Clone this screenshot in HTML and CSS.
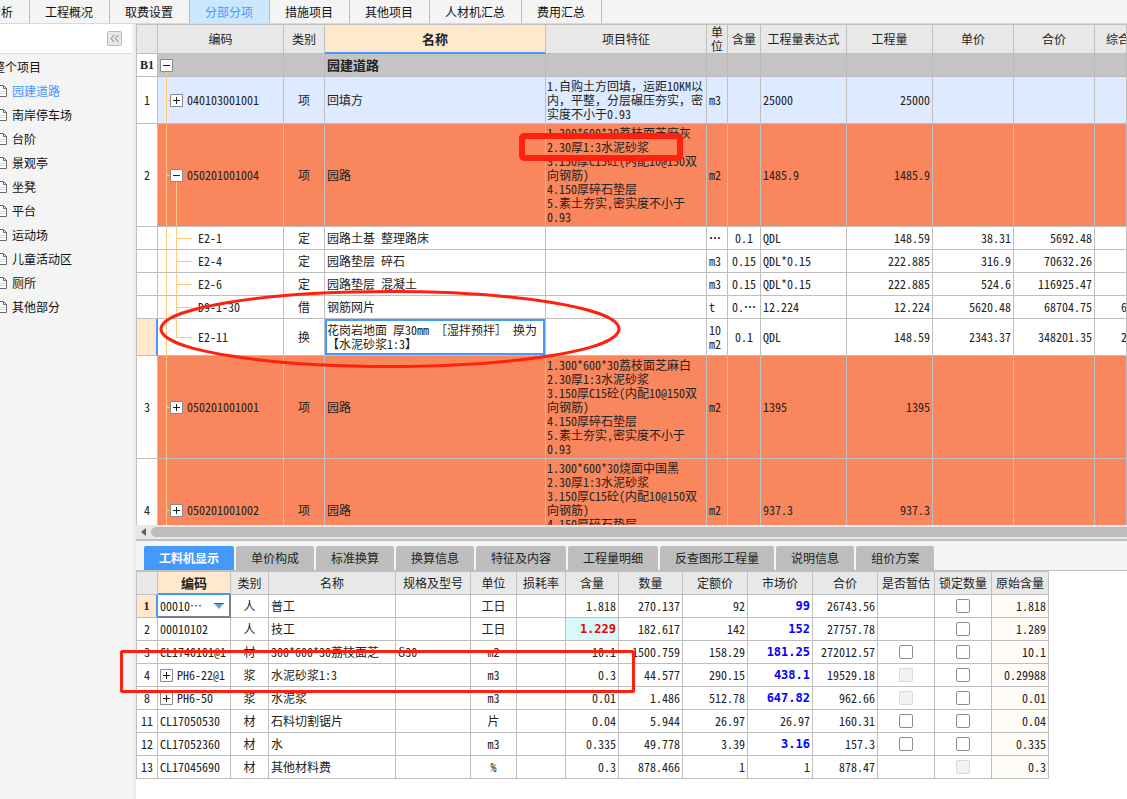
FILE: index.html
```html
<!DOCTYPE html>
<html lang="zh-CN">
<head>
<meta charset="utf-8">
<title>分部分项</title>
<link rel="stylesheet" href="styles.css">
</head>
<body>
<svg class="defs" aria-hidden="true">
  <symbol id="doc" viewBox="0 0 12 14"><path d="M1.500 1.500H7.500L10.500 4.500V12.500H1.500Z" fill="#fff" stroke="#6b6b6b"/><path d="M7.500 1.500V4.500H10.500" fill="none" stroke="#6b6b6b"/><path d="M3 7.500H9M3 9.500H9" stroke="#d5d5d5"/></symbol>
  <symbol id="plus" viewBox="0 0 13 13"><path d="M.5.5H12.500V12.500H.5Z" fill="#fff" stroke="#8a8a8a"/><path d="M3 6.500H10M6.500 3V10" stroke="#222"/></symbol>
  <symbol id="minus" viewBox="0 0 13 13"><path d="M.5.5H12.500V12.500H.5Z" fill="#fff" stroke="#8a8a8a"/><path d="M3 6.500H10" stroke="#222"/></symbol>
</svg>

<nav class="top-tabs">
  <button>分析</button><button>工程概况</button><button>取费设置</button><button class="active">分部分项</button><button>措施项目</button><button>其他项目</button><button>人材机汇总</button><button>费用汇总</button>
</nav>

<div class="main">
  <aside class="sidebar">
    <div class="side-head"><button class="collapse" aria-label="收起"><svg width="15" height="15" viewBox="0 0 15 15" fill="none" stroke="#666"><path d="M7 3.500L3.500 7.500L7 11.500M12 3.500L8.500 7.500L12 11.500"/></svg></button></div>
    <ul class="tree">
      <li class="root"><a href="#">整个项目</a></li>
      <li class="current"><a href="#"><svg class="doc"><use href="#doc"/></svg>园建道路</a></li>
      <li><a href="#"><svg class="doc"><use href="#doc"/></svg>南岸停车场</a></li>
      <li><a href="#"><svg class="doc"><use href="#doc"/></svg>台阶</a></li>
      <li><a href="#"><svg class="doc"><use href="#doc"/></svg>景观亭</a></li>
      <li><a href="#"><svg class="doc"><use href="#doc"/></svg>坐凳</a></li>
      <li><a href="#"><svg class="doc"><use href="#doc"/></svg>平台</a></li>
      <li><a href="#"><svg class="doc"><use href="#doc"/></svg>运动场</a></li>
      <li><a href="#"><svg class="doc"><use href="#doc"/></svg>儿童活动区</a></li>
      <li><a href="#"><svg class="doc"><use href="#doc"/></svg>厕所</a></li>
      <li><a href="#"><svg class="doc"><use href="#doc"/></svg>其他部分</a></li>
    </ul>
  </aside>

  <section class="content">
    <div class="grid-view">
      <table class="grid items">
        <colgroup><col class="w21"><col class="w126"><col class="w41"><col class="w221"><col class="w161"><col class="w21"><col class="w33"><col class="w86"><col class="w86"><col class="w81"><col class="w81"><col></colgroup>
        <thead><tr><th></th><th>编码</th><th>类别</th><th class="focus">名称</th><th>项目特征</th><th>单位</th><th>含量</th><th>工程量表达式</th><th>工程量</th><th>单价</th><th>合价</th><th class="cut">综合</th></tr></thead>
        <tbody>
          <tr class="section"><td class="no">B1</td><td class="code lv0"><svg class="box"><use href="#minus"/></svg></td><td></td><td>园建道路</td><td></td><td></td><td></td><td></td><td></td><td></td><td></td><td></td></tr>
          <tr class="blue"><td class="no">1</td><td class="code lv1"><svg class="box"><use href="#plus"/></svg>040103001001</td><td class="mid">项</td><td>回填方</td><td class="feat">1.自购土方回填<span class="full">，</span>运距10KM以<br>内<span class="full">，</span>平整<span class="full">，</span>分层碾压夯实<span class="full">，</span>密<br>实度不小于0.93</td><td>m3</td><td></td><td>25000</td><td class="num">25000</td><td></td><td></td><td></td></tr>
          <tr class="orange"><td class="no">2</td><td class="code lv1 open"><svg class="box"><use href="#minus"/></svg>050201001004</td><td class="mid">项</td><td>园路</td><td class="feat">1.300*600*30荔枝面芝麻灰<br>2.30厚1:3水泥砂浆<br>3.150厚C15砼(内配10@150双<br>向钢筋)<br>4.150厚碎石垫层<br>5.素土夯实,密实度不小于<br>0.93</td><td>m2</td><td></td><td>1485.9</td><td class="num">1485.9</td><td></td><td></td><td></td></tr>
          <tr class="sub"><td class="no"></td><td class="code lv2">E2-1</td><td class="mid">定</td><td>园路土基 整理路床</td><td></td><td><b class="full">…</b></td><td class="mid">0.1</td><td>QDL</td><td class="num">148.59</td><td class="num">38.31</td><td class="num">5692.48</td><td></td></tr>
          <tr class="sub"><td class="no"></td><td class="code lv2">E2-4</td><td class="mid">定</td><td>园路垫层 碎石</td><td></td><td>m3</td><td class="mid">0.15</td><td>QDL*0.15</td><td class="num">222.885</td><td class="num">316.9</td><td class="num">70632.26</td><td></td></tr>
          <tr class="sub"><td class="no"></td><td class="code lv2">E2-6</td><td class="mid">定</td><td>园路垫层 混凝土</td><td></td><td>m3</td><td class="mid">0.15</td><td>QDL*0.15</td><td class="num">222.885</td><td class="num">524.6</td><td class="num">116925.47</td><td></td></tr>
          <tr class="sub"><td class="no"></td><td class="code lv2">D9-1-30</td><td class="mid">借</td><td>钢筋网片</td><td></td><td>t</td><td class="mid">0.<b class="full">…</b></td><td>12.224</td><td class="num">12.224</td><td class="num">5620.48</td><td class="num">68704.75</td><td class="peek">6</td></tr>
          <tr class="tall"><td class="no focus-row"></td><td class="code lv2 last">E2-11</td><td class="mid">换</td><td class="selected">花岗岩地面 厚30mm <span class="full">［</span>湿拌预拌<span class="full">］</span> 换为<br><span class="full">【</span>水泥砂浆1:3<span class="full">】</span></td><td></td><td>10<br>m2</td><td class="mid">0.1</td><td>QDL</td><td class="num">148.59</td><td class="num">2343.37</td><td class="num">348201.35</td><td class="peek">2</td></tr>
          <tr class="orange"><td class="no">3</td><td class="code lv1"><svg class="box"><use href="#plus"/></svg>050201001001</td><td class="mid">项</td><td>园路</td><td class="feat">1.300*600*30荔枝面芝麻白<br>2.30厚1:3水泥砂浆<br>3.150厚C15砼(内配10@150双<br>向钢筋)<br>4.150厚碎石垫层<br>5.素土夯实,密实度不小于<br>0.93</td><td>m2</td><td></td><td>1395</td><td class="num">1395</td><td></td><td></td><td></td></tr>
          <tr class="orange"><td class="no">4</td><td class="code lv1"><svg class="box"><use href="#plus"/></svg>050201001002</td><td class="mid">项</td><td>园路</td><td class="feat">1.300*600*30烧面中国黑<br>2.30厚1:3水泥砂浆<br>3.150厚C15砼(内配10@150双<br>向钢筋)<br>4.150厚碎石垫层<br>5.素土夯实,密实度不小于<br>0.93</td><td>m2</td><td></td><td>937.3</td><td class="num">937.3</td><td></td><td></td><td></td></tr>
        </tbody>
      </table>
    </div>
    <div class="scroll"><svg width="5" height="8" viewBox="0 0 5 8"><path d="M5 0V8L0 4Z" fill="#606068"/></svg><div class="thumb"></div></div>

    <div class="detail">
      <div class="tabs">
        <button class="active">工料机显示</button><button>单价构成</button><button>标准换算</button><button>换算信息</button><button>特征及内容</button><button>工程量明细</button><button>反查图形工程量</button><button>说明信息</button><button>组价方案</button>
      </div>
      <div class="detail-body">
        <table class="grid parts">
          <colgroup><col class="w21"><col class="w73"><col class="w38"><col class="w127"><col class="w75"><col class="w46"><col class="w49"><col class="w53"><col class="w64"><col class="w65"><col class="w65"><col class="w65"><col class="w57"><col class="w57"><col class="w57"></colgroup>
          <thead><tr><th></th><th class="focus">编码</th><th>类别</th><th>名称</th><th>规格及型号</th><th>单位</th><th>损耗率</th><th>含量</th><th>数量</th><th>定额价</th><th>市场价</th><th>合价</th><th>是否暂估</th><th>锁定数量</th><th>原始含量</th></tr></thead>
          <tbody>
            <tr><td class="no focus-no">1</td><td class="combo"><select aria-label="编码"><option>00010…</option></select><svg class="caret" width="10" height="6" viewBox="0 0 10 6"><path d="M0 0H10L5 6Z" fill="#5aa5d8"/><path d="M0 .5H10" stroke="#2a5c8a"/></svg></td><td class="mid">人</td><td>普工</td><td></td><td class="mid">工日</td><td></td><td class="num">1.818</td><td class="num">270.137</td><td class="num">92</td><td class="num price">99</td><td class="num">26743.56</td><td></td><td class="mid"><input type="checkbox" aria-label="锁定数量"></td><td class="num base">1.818</td></tr>
            <tr><td class="no">2</td><td>00010102</td><td class="mid">人</td><td>技工</td><td></td><td class="mid">工日</td><td></td><td class="num changed">1.229</td><td class="num">182.617</td><td class="num">142</td><td class="num price">152</td><td class="num">27757.78</td><td></td><td class="mid"><input type="checkbox" aria-label="锁定数量"></td><td class="num base">1.289</td></tr>
            <tr><td class="no">3</td><td>CL1740101@1</td><td class="mid">材</td><td>300*600*30荔枝面芝</td><td>δ30</td><td class="mid">m2</td><td></td><td class="num">10.1</td><td class="num">1500.759</td><td class="num">158.29</td><td class="num price">181.25</td><td class="num">272012.57</td><td class="mid"><input type="checkbox" aria-label="是否暂估"></td><td class="mid"><input type="checkbox" aria-label="锁定数量"></td><td class="num base">10.1</td></tr>
            <tr><td class="no">4</td><td><svg class="box"><use href="#plus"/></svg>PH6-22@1</td><td class="mid">浆</td><td>水泥砂浆1:3</td><td></td><td class="mid">m3</td><td></td><td class="num">0.3</td><td class="num">44.577</td><td class="num">290.15</td><td class="num price">438.1</td><td class="num">19529.18</td><td class="mid"><input type="checkbox" aria-label="是否暂估" disabled></td><td class="mid"><input type="checkbox" aria-label="锁定数量"></td><td class="num base">0.29988</td></tr>
            <tr><td class="no">8</td><td><svg class="box"><use href="#plus"/></svg>PH6-50</td><td class="mid">浆</td><td>水泥浆</td><td></td><td class="mid">m3</td><td></td><td class="num">0.01</td><td class="num">1.486</td><td class="num">512.78</td><td class="num price">647.82</td><td class="num">962.66</td><td class="mid"><input type="checkbox" aria-label="是否暂估" disabled></td><td class="mid"><input type="checkbox" aria-label="锁定数量"></td><td class="num base">0.01</td></tr>
            <tr><td class="no">11</td><td>CL17050530</td><td class="mid">材</td><td>石料切割锯片</td><td></td><td class="mid">片</td><td></td><td class="num">0.04</td><td class="num">5.944</td><td class="num">26.97</td><td class="num">26.97</td><td class="num">160.31</td><td class="mid"><input type="checkbox" aria-label="是否暂估"></td><td class="mid"><input type="checkbox" aria-label="锁定数量"></td><td class="num base">0.04</td></tr>
            <tr><td class="no">12</td><td>CL17052360</td><td class="mid">材</td><td>水</td><td></td><td class="mid">m3</td><td></td><td class="num">0.335</td><td class="num">49.778</td><td class="num">3.39</td><td class="num price">3.16</td><td class="num">157.3</td><td class="mid"><input type="checkbox" aria-label="是否暂估"></td><td class="mid"><input type="checkbox" aria-label="锁定数量"></td><td class="num base">0.335</td></tr>
            <tr><td class="no">13</td><td>CL17045690</td><td class="mid">材</td><td>其他材料费</td><td></td><td class="mid">%</td><td></td><td class="num">0.3</td><td class="num">878.466</td><td class="num">1</td><td class="num">1</td><td class="num">878.47</td><td></td><td class="mid"><input type="checkbox" aria-label="锁定数量" disabled></td><td class="num base">0.3</td></tr>
          </tbody>
        </table>
      </div>
    </div>
  </section>
</div>

<svg class="marks" fill="none" stroke="#ff2010" aria-hidden="true">
  <rect x="522" y="136" width="158" height="22" rx="2" stroke-width="6"/>
  <ellipse cx="390" cy="329" rx="229" ry="37.500" stroke-width="3"/>
  <rect x="121.500" y="651.500" width="512" height="40" rx="1" stroke-width="3"/>
</svg>
</body>
</html>
```
FILE: styles.css
```css
* { box-sizing: border-box; }

body {
  margin: 0;
  height: 100vh;
  display: flex;
  flex-direction: column;
  position: relative;
  overflow: hidden;
  background: #f4f4f4;
  color: #222;
  font-family: "Noto Sans CJK SC", sans-serif;
  font-size: 12px;
  line-height: 14px;
}

button, select {
  font: inherit;
  color: inherit;
  border: 0;
  background: none;
  padding: 0;
}

.defs { position: absolute; width: 0; height: 0; }

/* top navigation */
.top-tabs {
  display: flex;
  flex: none;
  height: 24px;
  margin-left: -26px;
  border-bottom: 1px solid #d9d9d9;
}
.top-tabs button {
  padding: 0 16px 0 15px;
  border-right: 1px solid #bdbdbd;
  color: #111;
}
.top-tabs .active { background: #cce8ff; color: #4499ff; }

.main { display: flex; flex: 1; min-height: 0; }

/* project tree */
.sidebar {
  flex: none;
  width: 136px;
  overflow: hidden;
  border-right: 2px solid #ebebeb;
}
.side-head {
  display: flex;
  align-items: center;
  justify-content: flex-end;
  width: 132px;
  height: 30px;
  padding-right: 10px;
  background: #fff;
  border-bottom: 1px solid #dcdcdc;
}
.collapse {
  display: flex;
  border: 1px solid #bbb;
  border-radius: 2px;
  background: #e8e8e8;
}
.collapse svg { width: 13px; height: 13px; }
.tree { list-style: none; margin: 0; padding: 1px 0 0; }
.tree a {
  display: flex;
  align-items: center;
  gap: 4px;
  height: 24px;
  margin-left: -4px;
  color: #111;
  text-decoration: none;
}
.tree .root a { margin-left: -7px; }
.tree .current a { color: #4499ff; }
.doc { width: 12px; height: 14px; }

/* grids */
.content {
  flex: 1;
  min-width: 0;
  display: flex;
  flex-direction: column;
}
.grid-view { flex: 1; min-height: 0; overflow: hidden; background: #fff; }
.grid {
  table-layout: fixed;
  border-collapse: separate;
  border-spacing: 0;
  border-top: 1px solid #bfbfbf;
  border-left: 1px solid #bfbfbf;
  font-feature-settings: "hwid";
}
.full { font-feature-settings: normal; }
.items { width: 100%; }
.grid th, .grid td {
  padding: 0 2px;
  border-right: 1px solid #bfbfbf;
  border-bottom: 1px solid #bfbfbf;
  text-align: left;
  vertical-align: middle;
  overflow: hidden;
  white-space: nowrap;
}
.grid th {
  background: #e8e8e8;
  font-weight: 400;
  text-align: center;
}
.items th { height: 29px; white-space: normal; }
.grid .focus {
  background: #ffe8cc;
  font-size: 13px;
  font-weight: 700;
  border-bottom: 2px solid #4499ff;
}
.grid .cut { padding-left: 11px; text-align: left; white-space: nowrap; }
.grid .peek { padding-left: 26px; }
.grid .feat { padding: 0 0 0 1px; }
.grid .mid { text-align: center; }
.grid .num { text-align: right; }
.grid b { font-weight: 700; }
.grid .no { background: #fff; text-align: center; padding: 0; }

.w21 { width: 21px; } .w33 { width: 33px; } .w38 { width: 38px; }
.w41 { width: 41px; } .w46 { width: 46px; } .w49 { width: 49px; }
.w53 { width: 53px; } .w57 { width: 57px; } .w64 { width: 64px; }
.w65 { width: 65px; } .w73 { width: 73px; } .w75 { width: 75px; }
.w81 { width: 81px; } .w86 { width: 86px; } .w126 { width: 126px; }
.w127 { width: 127px; } .w161 { width: 161px; } .w221 { width: 221px; }

.section { height: 23px; background: #c4c4c4; font-size: 13px; font-weight: 700; }
.section td { border-color: #bbb; }
.section .no { font-family: "Liberation Serif", serif; font-size: 12px; }
.blue { height: 47px; background: #deeaff; }
.orange { height: 103px; background: #f9865c; }
.sub { height: 23px; }
.tall { height: 37px; }

/* hierarchy lines */
.box { width: 13px; height: 13px; margin-right: 4px; vertical-align: -2px; }
.code { background-repeat: no-repeat; }
.grid .lv0 {
  padding-left: 2px;
  background-image: linear-gradient(#ffc980, #ffc980);
  background-size: 1px 50%;
  background-position: 8px 100%;
}
.grid .lv1 {
  padding-left: 12px;
  background-image: linear-gradient(#ffc980, #ffc980), linear-gradient(#ffc980, #ffc980);
  background-size: 1px 100%, 4px 1px;
  background-position: 8px 0, 8px 50%;
}
.grid .open {
  background-image: linear-gradient(#ffc980, #ffc980), linear-gradient(#ffc980, #ffc980), linear-gradient(#ffc980, #ffc980);
  background-size: 1px 100%, 4px 1px, 1px 50%;
  background-position: 8px 0, 8px 50%, 18px 100%;
}
.grid .lv2 {
  padding-left: 40px;
  background-image: linear-gradient(#ffc980, #ffc980), linear-gradient(#ffc980, #ffc980), linear-gradient(#ffc980, #ffc980);
  background-size: 1px 100%, 16px 1px, 1px 100%;
  background-position: 8px 0, 18px 50%, 18px 0;
}
.grid .last { background-size: 1px 100%, 16px 1px, 1px 50%; }

.grid .focus-row { background: #ffe8cc; border-right: 2px solid #4499ff; }
.grid .selected { box-shadow: inset 0 0 0 2px #4499ff; }

.scroll {
  flex: none;
  display: flex;
  align-items: center;
  gap: 5px;
  height: 16px;
  padding-left: 5px;
  background: #e8e8e8;
  border-bottom: 2px solid #bfbfbf;
}
.thumb { flex: 1; height: 10px; border-radius: 5px 0 0 5px; background: #bdbdbd; }

/* detail panel */
.detail { flex: none; }
.tabs {
  display: flex;
  gap: 2px;
  height: 29px;
  padding: 5px 0 0 8px;
}
.tabs button {
  padding: 0 15px;
  border-radius: 2px 2px 0 0;
  background: #bdbdbd;
}
.tabs .active { background: #4499ff; color: #fff; font-weight: 700; }
.detail-body {
  padding-bottom: 20px;
  border-top: 1px solid #bfbfbf;
  background: #fff;
}
.parts { width: 913px; }
.parts tr { height: 23px; }
.grid .focus-no {
  background: #ffe8cc;
  font-family: "Liberation Serif", serif;
  font-weight: 700;
  border-right: 2px solid #4499ff;
}
.grid .combo {
  position: relative;
  border-right: 2px solid #808080;
  border-bottom: 2px solid #808080;
}
.combo select {
  display: block;
  width: 100%;
  height: 18px;
  appearance: none;
  font-feature-settings: "hwid";
}
.caret { position: absolute; right: 5px; top: 8px; }
.grid .price, .grid .changed {
  font-family: "DejaVu Sans Mono", monospace;
  font-weight: 700;
  font-size: 12px;
  color: #0000ff;
}
.grid .changed { background: #d9f8fa; color: #f00000; }
.grid .base { background: #fffbf6; }
.parts input {
  display: block;
  appearance: none;
  width: 14px;
  height: 14px;
  margin: 0 auto;
  border: 1px solid #8c8c8c;
  border-radius: 2px;
  background: #fff;
}
.parts input:disabled { border-color: #d8d8d8; background: #f2f2f2; }

/* red annotations drawn over the page */
.marks {
  position: absolute;
  left: 0;
  top: 0;
  width: 100%;
  height: 100%;
  pointer-events: none;
}
```
